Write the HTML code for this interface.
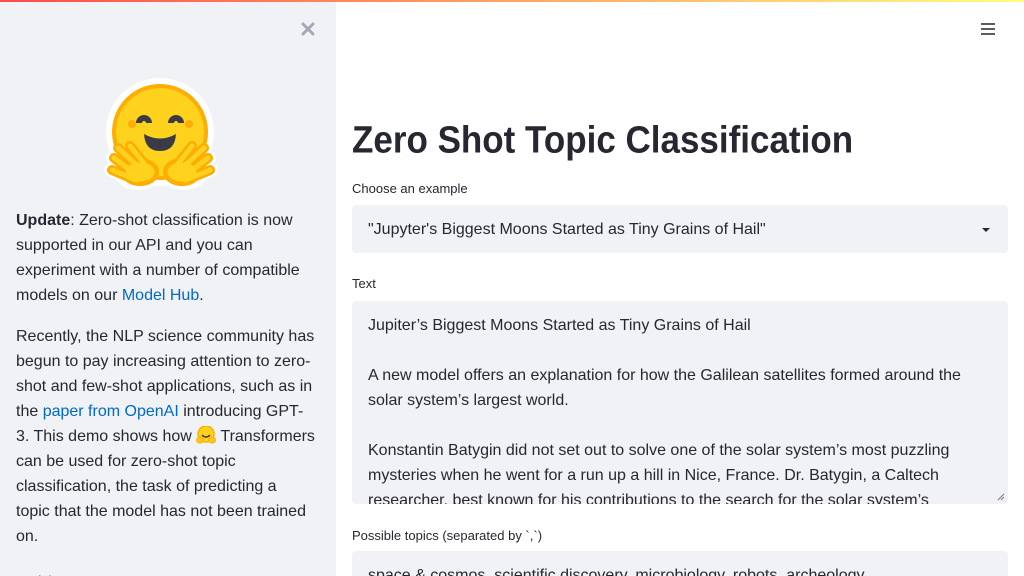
<!DOCTYPE html>
<html style="width:1024px;height:576px;overflow:hidden"><head><meta charset="utf-8"><style>
*{margin:0;padding:0;box-sizing:border-box}
body{width:1024px;height:576px;overflow:hidden;font-family:"Liberation Sans",sans-serif;color:#262730;background:#fff;position:relative}
.bar{position:absolute;top:0;left:0;width:1024px;height:2px;background:linear-gradient(90deg,#ff4b4b,#fffd80)}
.side{position:absolute;top:2px;left:0;width:336px;height:574px;background:#f0f2f6;overflow:hidden}
.st{position:absolute;left:16px;font-size:16px;line-height:25px;color:#262730;white-space:nowrap}
a{color:#0068c9;text-decoration:none}
.lbl{position:absolute;left:352px;font-size:13px;color:#262730}
.box{position:absolute;left:352px;width:656px;background:#f0f2f6;border-radius:4px}
.mt{position:absolute;left:368px;font-size:16px;line-height:25px;white-space:nowrap;color:#262730}
</style></head><body>
<div class="bar"></div>
<div class="side">
<svg style="position:absolute;left:301px;top:20px" width="14" height="14" viewBox="0 0 14 14"><path d="M2 2L12 12M12 2L2 12" stroke="#a3a8b4" stroke-width="3" stroke-linecap="round"/></svg>
<svg style="position:absolute;left:100px;top:76px" width="122" height="114" viewBox="0 0 122 114">
<g stroke="#fff" stroke-width="12" stroke-linecap="round" fill="#fff">
<circle cx="60" cy="54" r="48"/>
<path d="M12 80L40 100M10 92L38 104M16 70L42 94M28 68L46 90M110 80L82 100M112 92L84 104M106 70L80 94M94 68L76 90"/>
<ellipse cx="38" cy="94" rx="18" ry="12"/><ellipse cx="84" cy="94" rx="18" ry="12"/>
</g>
<circle cx="60" cy="54" r="46" fill="#ffd21e" stroke="#ffac03" stroke-width="4"/>
<circle cx="32" cy="46" r="4" fill="#ffac03"/><circle cx="89" cy="46" r="4" fill="#ffac03"/>
<path d="M39 45a5 5 0 0 1 10 0" stroke="#3a3b45" stroke-width="6" fill="none"/>
<path d="M71 45a5 5 0 0 1 10 0" stroke="#3a3b45" stroke-width="6" fill="none"/>
<path d="M44 56q16 9 32 0q-1 17-16 17t-16-17z" fill="#3a3b45"/>
<g stroke="#ffac03" stroke-width="10" stroke-linecap="round" fill="#ffac03">
<path d="M14 80L38 98M12 92L36 102M18 70L42 92M30 68L46 88"/>
<ellipse cx="40" cy="94" rx="14" ry="9"/>
<path d="M108 80L84 98M110 92L86 102M104 70L80 92M92 68L76 88"/>
<ellipse cx="82" cy="94" rx="14" ry="9"/>
</g>
<g stroke="#ffd21e" stroke-width="5" stroke-linecap="round" fill="#ffd21e">
<path d="M14 80L38 98M12 92L36 102M18 70L42 92M30 68L46 88"/>
<ellipse cx="40" cy="94" rx="12" ry="7"/>
<path d="M108 80L84 98M110 92L86 102M104 70L80 92M92 68L76 88"/>
<ellipse cx="82" cy="94" rx="12" ry="7"/>
</g>
</svg>
<div class="st" style="top:206px"><b>Update</b>: Zero-shot classification is now<br>supported in our API and you can<br>experiment with a number of compatible<br>models on our <a>Model Hub</a>.</div>
<div class="st" style="top:322px">Recently, the NLP science community has<br>begun to pay increasing attention to zero-<br>shot and few-shot applications, such as in<br>the <a>paper from OpenAI</a> introducing GPT-<br>3. This demo shows how <svg width="20" height="18" viewBox="0 0 20 18" style="vertical-align:-3px"><circle cx="10" cy="8" r="8" fill="#ffd21e" stroke="#ffac03" stroke-width="1.5"/><path d="M6 9q4 4 8 0" stroke="#3a3b45" stroke-width="1.5" fill="none"/><ellipse cx="4" cy="14" rx="3.5" ry="3" fill="#ffc81e" stroke="#ffac03"/><ellipse cx="16" cy="14" rx="3.5" ry="3" fill="#ffc81e" stroke="#ffac03"/></svg> Transformers<br>can be used for zero-shot topic<br>classification, the task of predicting a<br>topic that the model has not been trained<br>on.</div>
<div class="st" style="top:566px;font-size:13px">Model</div>
</div>
<svg style="position:absolute;left:980px;top:22px" width="16" height="14" viewBox="0 0 16 14"><path d="M1 2H15M1 7H15M1 12H15" stroke="#262730" stroke-width="1.6"/></svg>
<div style="position:absolute;left:352px;top:119px;font-size:35px;font-weight:bold;color:#262730;transform:scaleY(1.08);transform-origin:top left">Zero Shot Topic Classification</div>
<div class="lbl" style="top:181px">Choose an example</div>
<div class="box" style="top:205px;height:48px"></div>
<div class="mt" style="top:217px">"Jupyter's Biggest Moons Started as Tiny Grains of Hail"</div>
<svg style="position:absolute;left:981px;top:227px" width="10" height="6" viewBox="0 0 10 6"><path d="M1 1L5 5L9 1z" fill="#262730"/></svg>
<div class="lbl" style="top:276px">Text</div>
<div class="box" style="top:301px;height:203px;overflow:hidden">
<div class="mt" style="left:16px;top:12px">Jupiter’s Biggest Moons Started as Tiny Grains of Hail<br><br>A new model offers an explanation for how the Galilean satellites formed around the<br>solar system’s largest world.<br><br>Konstantin Batygin did not set out to solve one of the solar system’s most puzzling<br>mysteries when he went for a run up a hill in Nice, France. Dr. Batygin, a Caltech<br>researcher, best known for his contributions to the search for the solar system’s</div>
<svg style="position:absolute;right:3px;bottom:3px" width="8" height="8" viewBox="0 0 8 8"><path d="M7 1L1 7M7 4L4 7" stroke="#777" stroke-width="1"/></svg>
</div>
<div class="lbl" style="top:528px">Possible topics (separated by `,`)</div>
<div class="box" style="top:551px;height:25px;border-radius:4px 4px 0 0"></div>
<div class="mt" style="top:563px">space &amp; cosmos, scientific discovery, microbiology, robots, archeology</div>
</body></html>
